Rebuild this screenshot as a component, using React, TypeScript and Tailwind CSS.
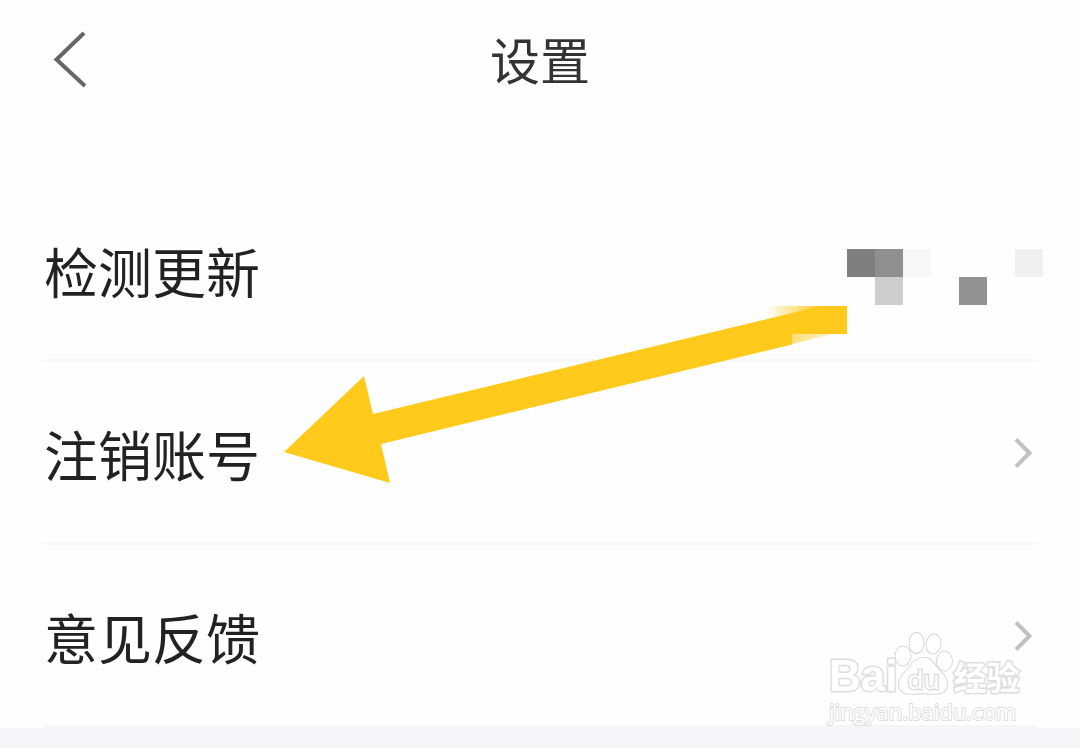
import React from 'react'

const mosaic = [
  'bg-[#7f7f7f]',
  'bg-[#8f8f8f]',
  'bg-[#f7f7f7]',
  '',
  '',
  '',
  'bg-[#f0f0f0]',
  '',
  'bg-[#cdcdcd]',
  '',
  '',
  'bg-[#929292]',
  '',
  '',
]

const items = [
  { id: 'update', label: '检测更新', masked: true },
  { id: 'cancel', label: '注销账号', masked: false },
  { id: 'feedback', label: '意见反馈', masked: false },
]

const Mosaic = () => (
  <div className="mt-3 grid grid-cols-[repeat(7,28px)] grid-rows-[28px_28px]">
    {mosaic.map((color, i) => (
      <span key={i} className={color} />
    ))}
  </div>
)

const RowChevron = () => (
  <svg className="h-9 w-6" viewBox="0 0 24 36" fill="none">
    <path d="M4 3.500L17.500 17L4 30.500" stroke="#c0c0c0" strokeWidth="4" />
  </svg>
)

const Arrow = () => (
  <svg
    className="pointer-events-none absolute top-[300px] left-[280px] h-[190px] w-[570px]"
    viewBox="280 300 570 190"
  >
    <defs>
      <linearGradient id="fadeTop" x1="0" x2="1" y1="0" y2="0">
        <stop offset="0" stopColor="#ffca1b" stopOpacity="0" />
        <stop offset="1" stopColor="#ffca1b" />
      </linearGradient>
      <linearGradient id="fadeBottom" x1="0" x2="1" y1="0" y2="0">
        <stop offset="0" stopColor="#ffca1b" stopOpacity="0.6" />
        <stop offset="1" stopColor="#ffca1b" stopOpacity="0.2" />
      </linearGradient>
    </defs>
    <path
      d="M284 452L364 376L373 414L792 313L820 306H847V334H792V344.500L381 444L390 483Z"
      fill="#ffca1b"
    />
    <path d="M766 306H822L792 313.500L766 319Z" fill="url(#fadeTop)" />
    <path d="M792 334H833L792 344Z" fill="url(#fadeBottom)" />
  </svg>
)

const Watermark = () => (
  <div className="pointer-events-none absolute top-[630px] left-[829px] font-['Open_Sans','Noto_Sans_CJK_SC',sans-serif] text-white [paint-order:stroke] [-webkit-text-stroke:3px_#dedede]">
    <div className="flex h-[66px] items-end">
      <span className="font-['Liberation_Sans',sans-serif] text-[44px] leading-[40px] font-bold">
        Bai
      </span>
      <div className="relative -ml-1 h-[66px] w-[60px]">
        <svg
          className="h-full w-full"
          viewBox="892 630 60 66"
          fill="#ffffff"
          stroke="#d8d8d8"
          strokeWidth="2"
        >
          <path d="M922 658C930 657 933 664 937 669C942 674 947 678 946 686C944 696 932 694 922 693C912 694 900 696 898 686C897 678 903 674 907 669C911 664 914 658 922 658Z" />
          <ellipse cx="902" cy="656" rx="7.500" ry="9.500" />
          <ellipse cx="915.500" cy="643" rx="7" ry="10" />
          <ellipse cx="932.500" cy="644" rx="7" ry="9.500" transform="rotate(10 932.500 644)" />
          <ellipse cx="943.500" cy="661" rx="7.500" ry="9.500" />
        </svg>
        <span className="absolute inset-x-0 bottom-1 text-center text-[26px] leading-[26px]">
          du
        </span>
      </div>
      <span className="text-[33px] leading-[36px] font-bold">经验</span>
    </div>
    <div className="mt-1 text-[22px] leading-[22px] [-webkit-text-stroke:2px_#dedede]">
      jingyan.baidu.com
    </div>
  </div>
)

const App = () => {
  return (
    <div className="relative flex min-h-screen flex-col bg-[#fefefe] font-['Noto_Sans_CJK_SC',sans-serif] text-[#222222]">
      <header className="grid h-[116px] grid-cols-3 items-center px-12">
        <button aria-label="返回" className="justify-self-start">
          <svg className="h-16 w-10" viewBox="0 0 40 64" fill="none">
            <path d="M36 7L8.500 33.500L37 60" stroke="#666666" strokeWidth="4" />
          </svg>
        </button>
        <h1 className="text-center text-[50px] leading-[60px] text-[#333333]">
          设置
        </h1>
      </header>

      <ul className="mt-[63px]">
        {items.map((item) => (
          <li key={item.id}>
            <button
              className={`flex h-[180px] w-full items-center justify-between pt-1 pl-11 text-left ${
                item.masked ? 'pr-[37px]' : 'pr-11'
              }`}
            >
              <span className="text-[54px] leading-[64px]">{item.label}</span>
              {item.masked ? <Mosaic /> : <RowChevron />}
            </button>
            {item.id !== 'feedback' && (
              <div className="mx-11 h-[3px] bg-[#f8f8fa]" />
            )}
          </li>
        ))}
      </ul>

      <div className="mx-11 h-[3px] bg-[#f5f6f9]" />
      <div className="flex-1 bg-[#f5f6f9]" />

      <Arrow />
      <Watermark />
    </div>
  )
}

export default App
